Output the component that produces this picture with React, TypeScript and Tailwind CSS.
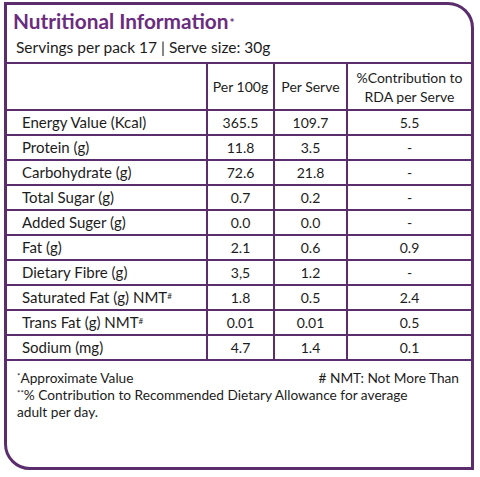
import React from "react";

type Row = { label: React.ReactNode; per100: string; perServe: string; rda: string };

const rows: Row[] = [
    { label: "Energy Value (Kcal)", per100: "365.5", perServe: "109.7", rda: "5.5" },
    { label: "Protein (g)", per100: "11.8", perServe: "3.5", rda: "-" },
    { label: "Carbohydrate (g)", per100: "72.6", perServe: "21.8", rda: "-" },
    { label: "Total Sugar (g)", per100: "0.7", perServe: "0.2", rda: "-" },
    { label: "Added Suger (g)", per100: "0.0", perServe: "0.0", rda: "-" },
    { label: "Fat (g)", per100: "2.1", perServe: "0.6", rda: "0.9" },
    { label: "Dietary Fibre (g)", per100: "3,5", perServe: "1.2", rda: "-" },
    {
        label: (
            <>
                Saturated Fat (g) NMT<sup className="text-[8px] relative -top-[2px]">#</sup>
            </>
        ),
        per100: "1.8",
        perServe: "0.5",
        rda: "2.4",
    },
    {
        label: (
            <>
                Trans Fat (g) NMT<sup className="text-[8px] relative -top-[2px]">#</sup>
            </>
        ),
        per100: "0.01",
        perServe: "0.01",
        rda: "0.5",
    },
    { label: "Sodium (mg)", per100: "4.7", perServe: "1.4", rda: "0.1" },
];

const font = { fontFamily: "Lato, 'Open Sans', sans-serif" };

const App = () => {
    return (
        <div className="w-[480px] h-[477px] bg-white pt-[2px] pl-[4px]" style={font}>
            <div className="w-[470px] h-[468px] border-[3px] border-[#5c2d6d] rounded-tr-[26px] rounded-bl-[26px] flex flex-col text-[#1c1c1c]">
                <div className="pl-[6px] pt-[2px] pb-[5px]">
                    <h1 className="text-[20.8px] leading-[28px] font-bold text-[#6b2c7e]">
                        Nutritional Information
                        <sup className="text-[12px] relative -top-[2px] ml-[1px]">*</sup>
                    </h1>
                    <p className="mt-[2px] text-[15.5px] leading-[20px] pl-[3px]">
                        Servings per pack 17 | Serve size: 30g
                    </p>
                </div>

                <div className="grid grid-cols-[199px_67px_73px_1fr] text-[14px]">
                    {/* header */}
                    <div className="h-[47px] border-t-2 border-[#5c2d6d]" />
                    <div className="h-[47px] border-t-2 border-l-2 border-[#5c2d6d] flex items-center justify-center">
                        Per 100g
                    </div>
                    <div className="h-[47px] border-t-2 border-l-2 border-[#5c2d6d] flex items-center justify-center">
                        Per Serve
                    </div>
                    <div className="h-[47px] border-t-2 border-l-2 border-[#5c2d6d] flex items-center justify-center text-center leading-[19px]">
                        %Contribution to
                        <br />
                        RDA per Serve
                    </div>

                    {rows.map((r, i) => (
                        <React.Fragment key={i}>
                            <div className="h-[25px] border-t-2 border-[#5c2d6d] flex items-center pl-[15px] text-[15px]">
                                {r.label}
                            </div>
                            <div className="h-[25px] border-t-2 border-l-2 border-[#5c2d6d] flex items-center justify-center">
                                {r.per100}
                            </div>
                            <div className="h-[25px] border-t-2 border-l-2 border-[#5c2d6d] flex items-center justify-center">
                                {r.perServe}
                            </div>
                            <div className="h-[25px] border-t-2 border-l-2 border-[#5c2d6d] flex items-center justify-center">
                                {r.rda}
                            </div>
                        </React.Fragment>
                    ))}
                </div>

                <div className="border-t-2 border-[#5c2d6d] pt-[8px] pl-[10px] pr-[12px] text-[13.7px] leading-[17px]">
                    <div className="flex justify-between">
                        <span>
                            <sup className="text-[8px]">*</sup>Approximate Value
                        </span>
                        <span># NMT: Not More Than</span>
                    </div>
                    <p>
                        <sup className="text-[8px]">**</sup>% Contribution to Recommended Dietary Allowance for average
                        <br />
                        adult per day.
                    </p>
                </div>
            </div>
        </div>
    );
};

export default App;
